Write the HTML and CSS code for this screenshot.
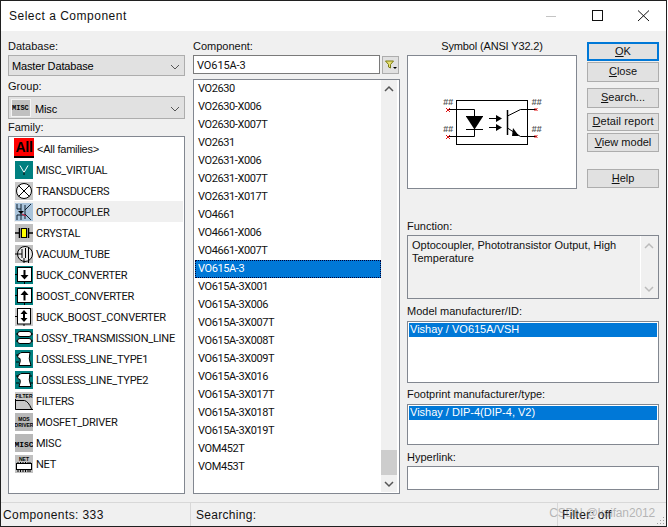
FILE: index.html
```html
<!DOCTYPE html>
<html lang="en">
<head>
<meta charset="utf-8">
<title>Select a Component</title>
<link rel="stylesheet" href="styles.css">
</head>
<body>
<div class="window">
  <header class="titlebar">
    <span class="title">Select a Component</span>
    <div class="winbtns">
      <svg class="winbtn" width="46" height="30" viewBox="0 0 46 30"><path d="M18 15.500h10" stroke="#c4c4c4"/></svg>
      <svg class="winbtn" width="46" height="30" viewBox="0 0 46 30"><rect x="18.500" y="9.500" width="10" height="10" fill="none" stroke="#111"/></svg>
      <svg class="winbtn" width="46" height="30" viewBox="0 0 46 30"><path d="M18 9.500l11 10.500M29 9.500L18 20" stroke="#111" fill="none"/></svg>
    </div>
  </header>
  <main class="content">
    <section class="col-left">
      <label class="lbl">Database:</label>
      <div class="combo combo-db"><span>Master Database</span><svg class="chev" width="10" height="6" viewBox="0 0 10 6"><path d="M1 1l4 4 4-4" fill="none" stroke="#555"/></svg></div>
      <label class="lbl lbl-group">Group:</label>
      <div class="combo combo-group">
        <span class="misc-chip">MISC</span><span class="misc-name">Misc</span>
        <svg class="chev" width="10" height="6" viewBox="0 0 10 6"><path d="M1 1l4 4 4-4" fill="none" stroke="#555"/></svg>
      </div>
      <label class="lbl lbl-family">Family:</label>
      <ul class="family">
        <li class="fam fam-first"><svg class="ico" viewBox="0 0 20 20"><rect width="20" height="20" fill="#f00"/><rect y="18" width="20" height="2" fill="#000"/><text x="10" y="14" class="t-all">All</text></svg><span>&lt;All families&gt;</span></li>
        <li class="fam"><svg class="ico" viewBox="0 0 18 18"><rect width="18" height="18" fill="#008080"/><path d="M5 4.500l4 7 4-7" fill="none" stroke="#fff"/><path d="M9 11v3" stroke="#000"/></svg>MISC_VIRTUAL</li>
        <li class="fam"><svg class="ico" viewBox="0 0 18 18"><rect width="18" height="18" fill="#c8c8c8"/><circle cx="9" cy="9" r="7.500" fill="#fff" stroke="#000"/><path d="M3.500 3.500l11 11M14.500 3.500l-11 11" stroke="#000"/></svg>TRANSDUCERS</li>
        <li class="fam fam-hover"><svg class="ico" viewBox="0 0 18 18"><rect width="18" height="18" fill="#a9c3da"/><path d="M2 1v5l4 0M6 1v16M2 17v-5h8M10 2v14M10 7l6-6M10 11l6 6" fill="none" stroke="#123"/><path d="M3 8h6l-3 3z" fill="#000"/><path d="M7 11l4 2" stroke="#e02040"/></svg>OPTOCOUPLER</li>
        <li class="fam"><svg class="ico" viewBox="0 0 18 18"><rect width="18" height="18" fill="#c0c0c0"/><path d="M0 9h5M13 9h5" stroke="#000" stroke-width="1.500"/><path d="M4.500 4v10M13.500 4v10" stroke="#000" stroke-width="1.500"/><rect x="6.500" y="4.500" width="5" height="9" fill="#ff0" stroke="#000"/></svg>CRYSTAL</li>
        <li class="fam"><svg class="ico" viewBox="0 0 18 18"><rect width="18" height="18" fill="#c0c0c0"/><circle cx="10" cy="9" r="7.500" fill="#e8e8e8" stroke="#000"/><path d="M0 9h7M7 4v9M10.500 3v10M13.500 3v10M9 13v5M13.500 13v5" fill="none" stroke="#000"/></svg>VACUUM_TUBE</li>
        <li class="fam"><svg class="ico" viewBox="0 0 18 18"><rect width="18" height="18" fill="#008080"/><rect x="2.500" y="1.500" width="14" height="14" fill="#fff" stroke="#000"/><path d="M9.500 4v6" stroke="#000" stroke-width="2"/><path d="M5.500 9h8l-4 4.500z" fill="#000"/><path d="M0 8.500h2.500M9.500 16v2" stroke="#000"/></svg>BUCK_CONVERTER</li>
        <li class="fam"><svg class="ico" viewBox="0 0 18 18"><rect width="18" height="18" fill="#008080"/><rect x="2.500" y="1.500" width="14" height="14" fill="#fff" stroke="#000"/><path d="M9.500 7v6.500" stroke="#000" stroke-width="2"/><path d="M5.500 8h8l-4-4.500z" fill="#000"/><path d="M0 8.500h2.500M9.500 16v2" stroke="#000"/></svg>BOOST_CONVERTER</li>
        <li class="fam"><svg class="ico" viewBox="0 0 18 18"><rect width="18" height="18" fill="#c8c8c8"/><rect x="2.500" y="0.500" width="13" height="15.500" fill="#fff" stroke="#000"/><path d="M9 4v8" stroke="#000" stroke-width="2"/><path d="M5.500 6h7L9 2zM5.500 10h7L9 14z" fill="#000"/><path d="M0 8.500h2.500M9 16v2" stroke="#000"/></svg>BUCK_BOOST_CONVERTER</li>
        <li class="fam"><svg class="ico" viewBox="0 0 18 18"><rect width="18" height="18" fill="#008080"/><path d="M5 2.500h9a2.500 2.500 0 0 1 0 5H5a2.500 2.500 0 0 1 0-5zM5 9.500h9a2.500 2.500 0 0 1 0 5H5a2.500 2.500 0 0 1 0-5z" fill="#fff" stroke="#000"/><path d="M1 5h2M16 5h2M1 12h2M16 12h2" stroke="#000"/></svg>LOSSY_TRANSMISSION_LINE</li>
        <li class="fam"><svg class="ico" viewBox="0 0 18 18"><rect width="18" height="18" fill="#008080"/><path d="M5 3.500a2 2 0 0 1 2-1h8q-2 6 1 13H4q2-5 1-7a2.500 2.500 0 0 1 0-5z" fill="#fff" stroke="#000"/><path d="M1 5h3M1 12h3" stroke="#000"/></svg>LOSSLESS_LINE_TYPE1</li>
        <li class="fam"><svg class="ico" viewBox="0 0 18 18"><rect width="18" height="18" fill="#008080"/><path d="M5 3.500a2 2 0 0 1 2-1h8q-2 6 1 13H4q2-5 1-7a2.500 2.500 0 0 1 0-5z" fill="#fff" stroke="#000"/><path d="M1 5h3M1 12h3M14 5h3M15 12h3" stroke="#000"/></svg>LOSSLESS_LINE_TYPE2</li>
        <li class="fam"><svg class="ico" viewBox="0 0 18 18"><rect width="18" height="18" fill="#c8c8c8"/><text x="9" y="5.500" class="t-tiny">FILTER</text><path d="M0.500 8.500h9q4 1 7 8.500M0.500 7v10.500h17.500" fill="none" stroke="#000"/></svg>FILTERS</li>
        <li class="fam"><svg class="ico" viewBox="0 0 18 18"><rect width="18" height="18" fill="#b8b8b8"/><text x="9" y="7.500" class="t-tiny">MOS</text><text x="9" y="14" class="t-tiny">DRIVER</text></svg>MOSFET_DRIVER</li>
        <li class="fam"><svg class="ico" viewBox="0 0 18 18"><rect width="18" height="18" fill="#b8b8b8"/><text x="9" y="12.500" class="t-misc">MISC</text></svg>MISC</li>
        <li class="fam"><svg class="ico" viewBox="0 0 18 18"><rect width="18" height="18" fill="#c0c0c0"/><text x="9" y="6" class="t-tiny">NET</text><rect x="1.500" y="8.500" width="15" height="6" fill="#fff" stroke="#000"/><path d="M3 7v1.500M5.500 7v1.500M8 7v1.500M10.500 7v1.500M13 7v1.500M15 7v1.500M3 15v2M5.500 15v2M8 15v2M10.500 15v2M13 15v2M15 15v2" stroke="#000"/></svg>NET</li>
      </ul>
    </section>

    <section class="col-mid">
      <label class="lbl">Component:</label>
      <div class="search-row">
        <div class="input">VO615A-3</div>
        <button class="filter-btn" aria-label="Filter"><svg width="12" height="10" viewBox="0 0 12 10"><path d="M0.500 1h8L5.500 4.500V8L3.500 7V4.500z" fill="#e8e070" stroke="#7a7a10"/><path d="M8 7h4l-2 2z" fill="#000"/></svg></button>
      </div>
      <div class="list">
        <ul class="items">
          <li>VO2630</li><li>VO2630-X006</li><li>VO2630-X007T</li><li>VO2631</li><li>VO2631-X006</li><li>VO2631-X007T</li><li>VO2631-X017T</li><li>VO4661</li><li>VO4661-X006</li><li>VO4661-X007T</li><li class="sel">VO615A-3</li><li>VO615A-3X001</li><li>VO615A-3X006</li><li>VO615A-3X007T</li><li>VO615A-3X008T</li><li>VO615A-3X009T</li><li>VO615A-3X016</li><li>VO615A-3X017T</li><li>VO615A-3X018T</li><li>VO615A-3X019T</li><li>VOM452T</li><li>VOM453T</li>
        </ul>
        <div class="scrollbar">
          <svg width="16" height="17" viewBox="0 0 16 17"><path d="M4 11l4-4 4 4" fill="none" stroke="#555" stroke-width="1.500"/></svg>
          <div class="track"><div class="thumb"></div></div>
          <svg width="16" height="17" viewBox="0 0 16 17"><path d="M4 7l4 4 4-4" fill="none" stroke="#555" stroke-width="1.500"/></svg>
        </div>
      </div>
    </section>

    <section class="col-right">
      <div class="top">
        <div class="symbol-wrap">
          <div class="symbol-title">Symbol (ANSI Y32.2)</div>
          <div class="symbol">
            <svg width="168" height="132" viewBox="0 0 168 132">
              <g fill="none" stroke="#000">
                <rect x="48.500" y="44.500" width="71" height="44"/>
                <path d="M40 53.500h26.500V80.500H40"/>
                <path d="M58 73.500h17M58 60.500h17"/>
                <path d="M81 62.500h8M81 71.500h8"/>
                <path d="M99.500 54v25" stroke-width="1.500"/>
                <path d="M99.500 60l13-6.500h16M99.500 72l13 8.500h16"/>
              </g>
              <path d="M58 60.500h17l-8.500 13z" fill="#000"/>
              <path d="M88 59l6 3.500-6 3.500zM88 68l6 3.500-6 3.500zM105 72l6 8-7 0z" fill="#000"/>
              <path d="M38 52l4 4M42 52l-4 4M38 79l4 4M42 79l-4 4M126.500 52l3 3M129.500 52l-3 3M126.500 79l3 3M129.500 79l-3 3" stroke="#e01010" fill="none"/>
              <text x="40" y="49" class="t-pin">##</text><text x="40" y="76" class="t-pin">##</text><text x="128.500" y="49" class="t-pin">##</text><text x="128.500" y="76" class="t-pin">##</text>
            </svg>
          </div>
        </div>
        <div class="buttons">
          <button class="btn btn-ok"><u>O</u>K</button>
          <button class="btn btn-close"><u>C</u>lose</button>
          <button class="btn btn-search"><u>S</u>earch...</button>
          <button class="btn btn-detail"><u>D</u>etail report</button>
          <button class="btn btn-view"><u>V</u>iew model</button>
          <button class="btn btn-help"><u>H</u>elp</button>
        </div>
      </div>
      <label class="lbl lbl-func">Function:</label>
      <div class="function">
        <p>Optocoupler, Phototransistor Output, High Temperature</p>
        <div class="fn-scroll">
          <svg width="16" height="17" viewBox="0 0 16 17"><path d="M4 10l4-4 4 4" fill="none" stroke="#bbb" stroke-width="1.500"/></svg>
          <svg width="16" height="17" viewBox="0 0 16 17"><path d="M4 7l4 4 4-4" fill="none" stroke="#bbb" stroke-width="1.500"/></svg>
        </div>
      </div>
      <label class="lbl lbl-model">Model manufacturer/ID:</label>
      <div class="sublist sub-model"><div class="subsel">Vishay / VO615A/VSH</div></div>
      <label class="lbl lbl-sub">Footprint manufacturer/type:</label>
      <div class="sublist sub-foot"><div class="subsel">Vishay / DIP-4(DIP-4, V2)</div></div>
      <label class="lbl lbl-link">Hyperlink:</label>
      <div class="sublist sub-link"></div>
    </section>
  </main>
  <footer class="status">
    <div class="st st-a">Components: 333</div>
    <div class="st st-b">Searching:</div>
    <div class="st st-c">Filter: off</div>
    <span class="watermark">CSDN @kaifan2012</span>
    <svg class="grip" width="10" height="10" viewBox="0 0 10 10"><path d="M7 1h1v1H7zM4 4h1v1H4zM7 4h1v1H7zM1 7h1v1H1zM4 7h1v1H4zM7 7h1v1H7z" fill="#a0a0a0"/></svg>
  </footer>
</div>
</body>
</html>
```
FILE: styles.css
```css
* { box-sizing: border-box; }
html, body { margin: 0; padding: 0; }
body { width: 668px; height: 527px; overflow: hidden; background: #fff; font: 11px/13px "Liberation Sans", Arial, sans-serif; color: #000; }
ul { list-style: none; margin: 0; padding: 0; }
p { margin: 0; }
.window { width: 667px; height: 527px; display: flex; flex-direction: column; border: 1px solid #202020; background: #f0f0f0; }
.titlebar { height: 30px; flex: none; background: #fff; display: flex; align-items: center; justify-content: space-between; padding-left: 8px; }
.title { font-size: 12px; letter-spacing: 0.5px; color: #111; }
.winbtns { display: flex; }
.winbtn { display: block; }
.content { flex: none; height: 471px; display: flex; padding: 9px 7px 0 7px; }
.lbl { display: block; height: 13px; color: #111; }
.col-left { width: 177px; flex: none; margin-right: 8px; }
.combo { display: flex; align-items: center; position: relative; background: #e1e1e1; border: 1px solid #adadad; letter-spacing: -0.15px; }
.combo-db { height: 21px; margin-top: 2px; padding: 2px 0 0 3px; }
.combo-group { height: 23px; margin-top: 3px; padding: 1px 0 0 2px; gap: 4px; }
.misc-name { padding-top: 2px; }
.chev { position: absolute; right: 4px; top: 50%; margin-top: -2px; }
.lbl-group { margin-top: 4px; }
.lbl-family { margin-top: 2px; }
.misc-chip { width: 20px; height: 18px; background: #c0c0c0; border: 1px solid #f4f4f4; font: bold 7px/16px "Liberation Mono", monospace; overflow: hidden; white-space: nowrap; text-align: left; letter-spacing: 0; }
.family { height: 358px; margin-top: 2px; background: #fff; border: 1px solid #828790; padding: 1px 0 0 5px; }
.fam { height: 21px; display: flex; align-items: flex-start; gap: 3px; white-space: nowrap; color: #111; padding-left: 1px; font-family: Roboto, "Liberation Sans", sans-serif; letter-spacing: -0.25px; line-height: 23px; }
.fam-first { padding-left: 0; }
.fam-first span { font-family: "Liberation Sans", sans-serif; }
.fam-hover { background: #f0f0f0; margin-right: 1px; }
.ico { width: 18px; height: 18px; flex: none; display: block; align-self: center; }
.fam-first .ico { width: 20px; height: 20px; align-self: flex-start; }
.t-all { font: bold 14px "Liberation Sans", sans-serif; text-anchor: middle; fill: #000; }
.t-tiny { font: bold 5px "Liberation Sans", sans-serif; text-anchor: middle; fill: #000; letter-spacing: 0; }
.t-misc { font: bold 8px "Liberation Mono", monospace; text-anchor: middle; fill: #000; letter-spacing: 0; }
.t-pin { font: bold 9px "Liberation Mono", monospace; text-anchor: middle; fill: #555; letter-spacing: -0.5px; }
.col-mid { width: 207px; flex: none; margin-right: 7px; }
.search-row { display: flex; margin-top: 2px; align-items: flex-start; }
.input { width: 187px; height: 19px; background: #fff; border: 1px solid #7a7a7a; padding: 3px 0 0 3px; color: #111; font-family: Roboto, "Liberation Sans", sans-serif; letter-spacing: -0.1px; }
.filter-btn { width: 17px; height: 18px; margin: 1px 0 0 2px; padding: 0; background: #e1e1e1; border: 1px solid #adadad; display: flex; align-items: center; justify-content: center; }
.list { height: 415px; margin-top: 5px; background: #fff; border: 1px solid #828790; display: flex; padding: 0 2px 1px 1px; }
.items { flex: 1; }
.items li { height: 18px; line-height: 18px; padding-left: 3px; color: #111; font-family: Roboto, "Liberation Sans", sans-serif; letter-spacing: -0.4px; }
.items li.sel { background: #0078d7; color: #fff; outline: 1px dotted #003; outline-offset: -1px; }
.scrollbar { width: 16px; flex: none; display: flex; flex-direction: column; background: #f0f0f0; }
.scrollbar svg { flex: none; display: block; }
.track { flex: 1; display: flex; flex-direction: column; justify-content: flex-end; }
.thumb { height: 25px; background: #cdcdcd; }
.col-right { width: 252px; flex: none; }
.top { display: flex; gap: 10px; height: 148px; }
.symbol-wrap { width: 170px; flex: none; }
.symbol-title { height: 14px; text-align: center; color: #111; letter-spacing: -0.15px; }
.symbol { height: 134px; margin-top: 1px; background: #fff; border: 1px solid #828790; }
.symbol svg { display: block; }
.buttons { width: 72px; flex: none; display: flex; flex-direction: column; padding-top: 2px; }
.btn { width: 72px; font: inherit; padding: 0; background: #e1e1e1; border: 1px solid #adadad; color: #111; height: 19px; }
.btn-ok { border: 2px solid #0078d7; }
.btn-close { margin-top: 1px; height: 20px; }
.btn-search { margin-top: 6px; height: 20px; }
.btn-detail { margin-top: 5px; letter-spacing: 0.1px; }
.btn-view { margin-top: 2px; }
.btn-help { margin-top: 17px; }
.lbl-func { margin-top: 32px; }
.function { height: 64px; margin-top: 2px; display: flex; border: 1px solid #828790; background: #f0f0f0; padding: 2px 0 0 4px; }
.function p { flex: 1; padding-top: 1px; color: #111; line-height: 13px; }
.fn-scroll { width: 18px; flex: none; border-left: 1px solid #fff; display: flex; flex-direction: column; justify-content: space-between; margin-top: -2px; padding: 2px 0 1px; }
.fn-scroll svg { display: block; }
.lbl-model { margin-top: 6px; }
.lbl-sub { margin-top: 5px; }
.lbl-link { margin-top: 6px; }
.sublist { background: #fff; border: 1px solid #828790; margin-top: 3px; padding: 1px; }
.sub-model { height: 62px; }
.sub-foot { height: 41px; }
.sub-link { height: 24px; margin-top: 2px; }
.subsel { height: 14px; line-height: 13px; background: #0078d7; color: #fff; padding-left: 1px; }
.status { flex: 1; position: relative; display: flex; align-items: center; border-top: 1px solid #d8d8d8; background: #f0f0f0; }
.st { height: 100%; display: flex; align-items: center; padding-top: 2px; color: #111; font-size: 12px; letter-spacing: 0.4px; }
.st-a { width: 190px; padding-left: 2px; border-right: 1px solid #d8d8d8; }
.st-b { width: 367px; padding-left: 5px; border-right: 1px solid #d8d8d8; letter-spacing: 0.3px; }
.st-c { padding-left: 4px; letter-spacing: 0.3px; }
.watermark { position: absolute; right: 11px; top: 4px; font-size: 12px; color: rgba(120,120,120,0.5); letter-spacing: -0.15px; white-space: nowrap; }
.grip { position: absolute; right: 0; bottom: 0; }
```
